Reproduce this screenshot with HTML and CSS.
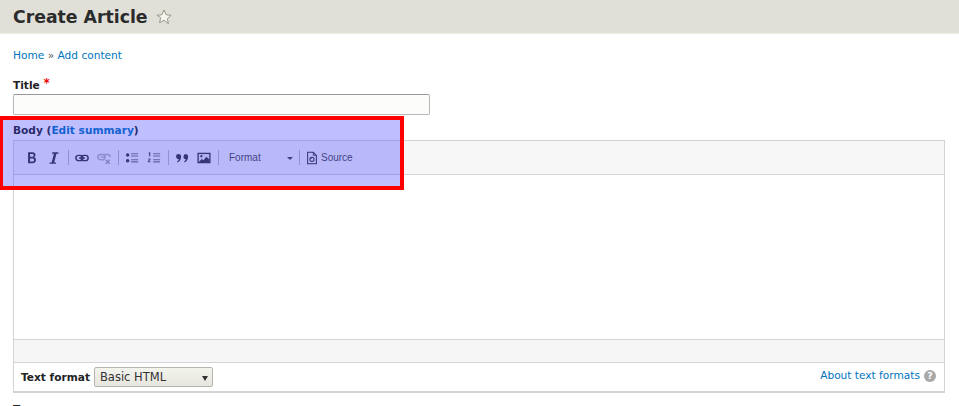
FILE: index.html
```html
<!DOCTYPE html>
<html lang="en">
<head>
<meta charset="utf-8">
<title>Create Article</title>
<link rel="stylesheet" href="styles.css">
</head>
<body>
<header class="page-head">
  <h1 class="page-title">Create Article</h1>
  <svg class="star" viewBox="0 0 16 16"><path d="M8 1l2.100 4.700 5 .6-3.700 3.400 1 5L8 11.300l-4.400 2.400 1-5L.9 6.300l5-.6z" fill="#f4f3ee" stroke="#8f8f80" stroke-width=".9"/></svg>
</header>
<main class="content">
  <nav class="crumbs"><a href="#">Home</a> » <a href="#">Add content</a></nav>
  <div class="field-title">
    <label class="label">Title <span class="req">*</span></label>
    <input class="text-input" type="text">
  </div>
  <div class="field-body">
    <div class="label">Body (<a href="#">Edit summary</a>)</div>
    <div class="editor">
      <div class="toolbar">
        <svg class="ico" viewBox="0 0 16 16"><path d="M3.500 1.500h5c2.300 0 3.500 1.200 3.500 3 0 1.300-.7 2.200-1.800 2.600 1.500.3 2.400 1.500 2.400 3 0 2.300-1.500 3.900-3.900 3.900H3.500zm2.300 2v3.100h2.400c1.100 0 1.600-.6 1.600-1.600s-.6-1.500-1.600-1.500zm0 5v3.500h2.700c1.200 0 1.800-.7 1.800-1.800s-.7-1.700-1.800-1.700z" fill="#333"/></svg>
        <svg class="ico gap" viewBox="0 0 16 16"><path d="M6 1.500h7v1.500h-2.200L8.200 13h2.200v1.500H3V13h2.300L7.900 3H5.700z" fill="#333"/></svg>
        <span class="sep"></span>
        <svg class="ico" viewBox="0 0 16 16"><rect x="1" y="5" width="8" height="6" rx="3" fill="none" stroke="#333" stroke-width="1.700"/><rect x="7" y="5" width="8" height="6" rx="3" fill="none" stroke="#333" stroke-width="1.700"/><path d="M4.500 8h7" stroke="#333" stroke-width="1.500"/></svg>
        <svg class="ico gap" viewBox="0 0 16 16"><g fill="none" stroke="#b5b5b5" stroke-width="1.700"><rect x="1" y="4" width="8" height="6" rx="3"/><path d="M7 4h5a3 3 0 0 1 3 3M4 7h6"/><path d="M10 10l4.500 4.500M14.500 10L10 14.500" stroke="#a5a5a5"/></g></svg>
        <span class="sep"></span>
        <svg class="ico" viewBox="0 0 16 16"><circle cx="3" cy="4.500" r="2" fill="#333"/><circle cx="3" cy="11" r="2" fill="#333"/><path d="M7 2.500h8v1.300H7zM7 5h8v1.300H7zM7 9.300h8v1.300H7zM7 11.800h8v1.300H7z" fill="#777"/></svg>
        <svg class="ico gap" viewBox="0 0 16 16"><path d="M2.500 1.500h1.200v4.500H2.500V2.700l-1 .3zM1.200 9c.4-.6 2.800-.7 2.800.7 0 1-1.500 1.500-1.800 2.300H4v.9H1V12c.3-1.300 1.800-1.600 1.800-2.300 0-.5-.9-.4-1.400 0z" fill="#333"/><path d="M7 2.500h8v1.300H7zM7 5h8v1.300H7zM7 9.300h8v1.300H7zM7 11.800h8v1.300H7z" fill="#777"/></svg>
        <span class="sep"></span>
        <svg class="ico" viewBox="0 0 16 16"><path d="M4 3.500a3 3 0 0 1 3 3c0 3-1.700 5.500-4 6.500l-.6-1c1-.6 1.700-1.500 2-2.500A3 3 0 0 1 4 3.500zM12 3.500a3 3 0 0 1 3 3c0 3-1.700 5.500-4 6.500l-.6-1c1-.6 1.700-1.500 2-2.500a3 3 0 0 1 .6-6z" fill="#333"/></svg>
        <svg class="ico gap" viewBox="0 0 16 16"><rect x=".5" y="2" width="15" height="12" fill="#333"/><rect x="2" y="3.500" width="12" height="9" fill="#eee"/><circle cx="5" cy="6" r="1.300" fill="#333"/><path d="M2 12.500L5.500 9l2 1.500 3-4L14 9.500v3z" fill="#333"/></svg>
        <span class="sep"></span>
        <span class="format">Format<span class="caret"></span></span>
        <span class="sep sep-source"></span>
        <svg class="ico" viewBox="0 0 16 16"><path d="M3 1.500h6.500L13 5v9.500H3z" fill="none" stroke="#333" stroke-width="1.200"/><path d="M9.500 1.500V5H13" fill="none" stroke="#333"/><circle cx="8" cy="9.500" r="2.400" fill="none" stroke="#333" stroke-width="1.200"/><path d="M6 6.500v2.200h2.200z" fill="#333"/></svg>
        <span class="source">Source</span>
      </div>
      <div class="edit-area"></div>
      <div class="status-bar"></div>
      <div class="format-row">
        <label class="format-label">Text format</label>
        <span class="fake-select">Basic HTML<span class="select-arrow"></span></span>
        <span class="about"><a class="about-link" href="#">About text formats</a><span class="help">?</span></span>
      </div>
    </div>
  </div>
  <div class="next-label">T</div>
</main>
<div class="highlight"></div>
</body>
</html>
```
FILE: styles.css
```css
* { box-sizing: border-box; }
html, body { margin: 0; height: 406px; overflow: hidden; }
body { background: #fff; color: #222; font-family: "DejaVu Sans", sans-serif; font-size: 10.6px; }
a { color: #0074bd; text-decoration: none; }
.page-head { height: 34px; background: #e0e0d8; border-bottom: 1px solid #eeeee8; padding: 0 13px; display: flex; align-items: center; gap: 8px; }
.page-title { margin: 0; font-size: 17.3px; line-height: 34px; font-weight: 700; color: #2b2b2b; }
.star { flex: none; width: 16px; height: 16px; }
.content { padding: 0 14px 0 13px; }
.crumbs { margin-top: 14px; height: 14px; line-height: 14px; color: #555; }
.field-title { margin-top: 16px; }
.label { display: block; font-weight: 700; line-height: 14px; height: 14px; color: #222; }
.req { color: #e00; font-size: 12px; line-height: 10px; vertical-align: 2px; }
.text-input { display: block; width: 417px; height: 21px; margin: 2px 0 0; background: #fcfcfa; border: 1px solid #b8b8b8; border-top-color: #999; border-radius: 2px; padding: 0; }
.field-body { margin-top: 8px; }
.editor { margin-top: 3px; border: 1px solid #d4d4d4; border-width: 1px 1px 2px 1px; height: 253px; display: flex; flex-direction: column; }
.toolbar { height: 34px; flex: none; background: #f7f7f7; border-bottom: 1px solid #d4d4d4; display: flex; align-items: center; padding-left: 11px; }
.ico { flex: none; width: 14px; height: 14px; }
.gap { margin-left: 8px; }
.sep { width: 1px; height: 15px; background: #bbb; flex: none; margin: 0 6px 0 7px; }
.format { width: 80px; height: 14px; line-height: 14px; color: #484848; font-family: "Liberation Sans", sans-serif; font-size: 10px; padding-left: 10px; margin-left: -6px; margin-right: -7px; position: relative; }
.caret { position: absolute; right: 6px; top: 6px; border: 3px solid transparent; border-top-color: #444; border-bottom: 0; }
.sep-source { margin-left: 7px; margin-right: 5px; }
.source { color: #484848; font-family: "Liberation Sans", sans-serif; font-size: 10px; margin-left: 2px; }
.edit-area { height: 165px; background: #fff; border-bottom: 1px solid #d4d4d4; flex: none; }
.status-bar { height: 23px; background: #f6f6f6; border-bottom: 1px solid #d4d4d4; flex: none; }
.format-row { flex: 1; display: flex; align-items: center; padding: 0 8px 0 7px; }
.format-label { font-weight: 700; }
.fake-select { margin-left: 4px; width: 119px; height: 20px; line-height: 18px; border: 1px solid #b5b5ad; border-radius: 2px; background: linear-gradient(#f4f4ee, #e6e6de); padding-left: 5px; font-size: 11.5px; color: #333; position: relative; }
.select-arrow { position: absolute; right: 4px; top: 8px; border: 3px solid transparent; border-top: 5px solid #333; border-bottom: 0; }
.about { margin-left: auto; margin-top: -2px; display: flex; align-items: center; gap: 4px; }
.about-link { margin-bottom: 2px; }
.help { width: 12px; height: 12px; border-radius: 50%; background: #a8a8a8; color: #fff; font-size: 9.500px; font-weight: 700; line-height: 12px; text-align: center; }
.next-label { margin-top: 9px; font-weight: 700; line-height: 14px; }
.highlight { position: absolute; left: -1px; top: 116px; width: 405px; height: 74px; border: 4px solid #f00; background: rgba(60, 60, 255, 0.33); }
```
